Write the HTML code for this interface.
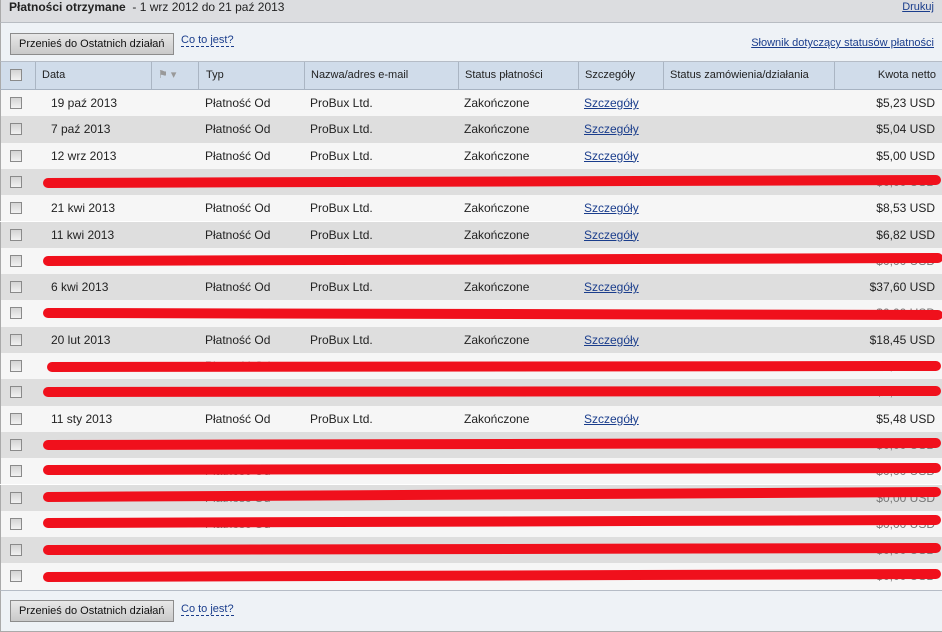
<!DOCTYPE html>
<html><head><meta charset="utf-8"><style>
*{margin:0;padding:0;box-sizing:border-box}
body{width:942px;height:632px;overflow:hidden;background:#fff;font-family:"Liberation Sans",Arial,sans-serif;font-size:12px;color:#222;position:relative}
.abs{position:absolute}
#title{left:0;top:0;width:942px;height:23px;background:#dcdde0;border-bottom:1px solid #b8bcc2;border-left:1px solid #aaa}
#bar{left:0;top:23px;width:942px;height:39px;background:#eef2f6;border-left:1px solid #aaa;border-bottom:1px solid #b5bcc6}
.btn{position:absolute;height:22px;background:linear-gradient(#e8e8e8,#c9c9c9);border:1px solid #8c8c8c;font-size:11px;line-height:20px;padding:0 8px;color:#111}
.lnk{position:absolute;color:#1a3d8c;font-size:11px}
.dash{border-bottom:1px dashed #1a3d8c}
#hdr{left:0;top:62px;width:942px;height:28px;background:#d0dcea;border-bottom:1px solid #a7b3c2;border-left:1px solid #aaa}
.h{position:absolute;top:0;height:27px;line-height:26px;font-size:11px;color:#222;border-left:1px solid #aab5c3}
.row{position:absolute;left:0;width:942px;height:26.3px;border-left:1px solid #aaa}
.row span{position:absolute;top:0;line-height:26px;font-size:12px;color:#222}
.row span.u{color:#1a3d8c}
.cb{position:absolute;width:12px;height:12px;border:1px solid #8a8a8a;background:linear-gradient(#d4d4d4,#f2f2f2)}
.u{color:#1a3d8c;text-decoration:underline}
.r{right:7px}
#foot{left:0;top:590px;width:942px;height:42px;background:#eef2f6;border-top:1px solid #b5bcc6;border-left:1px solid #aaa;border-bottom:1px solid #aaa}
</style></head><body>
<div id="title" class="abs"><span class="abs" style="left:8px;top:0;line-height:15px;font-size:12px"><b>Płatności otrzymane</b> &nbsp;- 1 wrz 2012 do 21 paź 2013</span><span class="abs u" style="right:8px;top:0;line-height:15px;font-size:11px">Drukuj</span></div>
<div id="bar" class="abs"><div class="btn" style="left:9px;top:10px">Przenieś do Ostatnich działań</div><span class="lnk dash" style="left:180px;top:11px">Co to jest?</span><span class="lnk" style="right:8px;top:14px;text-decoration:underline">Słownik dotyczący statusów płatności</span></div>
<div id="hdr" class="abs">
<div class="cb" style="left:9px;top:7px"></div>
<div class="h" style="left:34px;padding-left:6px;width:116px">Data</div>
<div class="h" style="left:150px;width:47px;color:#999;padding-left:6px">⚑ ▾</div>
<div class="h" style="left:197px;padding-left:7px;width:106px">Typ</div>
<div class="h" style="left:303px;padding-left:6px;width:154px">Nazwa/adres e-mail</div>
<div class="h" style="left:457px;padding-left:6px;width:120px">Status płatności</div>
<div class="h" style="left:577px;padding-left:6px;width:85px">Szczegóły</div>
<div class="h" style="left:662px;padding-left:6px;width:171px">Status zamówienia/działania</div>
<div class="h" style="left:833px;width:109px;text-align:right;padding-right:7px">Kwota netto</div>
</div>
<div id="rows"></div>
<div id="foot" class="abs"><div class="btn" style="left:9px;top:9px">Przenieś do Ostatnich działań</div><span class="lnk dash" style="left:180px;top:12px">Co to jest?</span></div>
<svg class="abs" style="left:0;top:0" width="942" height="632">
<g stroke="#f0101c" stroke-width="10" stroke-linecap="round" fill="none">
<line x1="48" y1="183" x2="936" y2="180"/>
<line x1="48" y1="261" x2="938" y2="258"/>
<line x1="48" y1="313" x2="938" y2="315"/>
<line x1="52" y1="367" x2="936" y2="366"/>
<line x1="48" y1="392" x2="936" y2="391"/>
<line x1="48" y1="445" x2="936" y2="443"/>
<line x1="48" y1="470" x2="936" y2="468"/>
<line x1="48" y1="497" x2="936" y2="492"/>
<line x1="48" y1="523" x2="936" y2="520"/>
<line x1="48" y1="550" x2="936" y2="548"/>
<line x1="48" y1="577" x2="936" y2="574"/>
</g></svg>
<script>
var d=[["19 paź 2013","$5,23 USD"],["7 paź 2013","$5,04 USD"],["12 wrz 2013","$5,00 USD"],null,["21 kwi 2013","$8,53 USD"],["11 kwi 2013","$6,82 USD"],null,["6 kwi 2013","$37,60 USD"],null,["20 lut 2013","$18,45 USD"],null,null,["11 sty 2013","$5,48 USD"],null,null,null,null,null,null];
var h="";
for(var i=0;i<19;i++){var y=90+i*26.3;var bg=i%2?"#dedede":"#f6f6f6";
h+='<div class="row" style="top:'+y+'px;background:'+bg+'"><div class="cb" style="left:9px;top:7px"></div>';
if(d[i]){h+='<span style="left:50px">'+d[i][0]+'</span><span style="left:204px">Płatność Od</span><span style="left:309px">ProBux Ltd.</span><span style="left:463px">Zakończone</span><span class="u" style="left:583px">Szczegóły</span><span class="r">'+d[i][1]+'</span>';}
else{h+='<span style="left:204px;color:#777">Płatność Od</span><span class="r" style="color:#777">$0,00 USD</span>';}
h+='</div>';}
document.getElementById("rows").innerHTML=h;
</script>
</body></html>
